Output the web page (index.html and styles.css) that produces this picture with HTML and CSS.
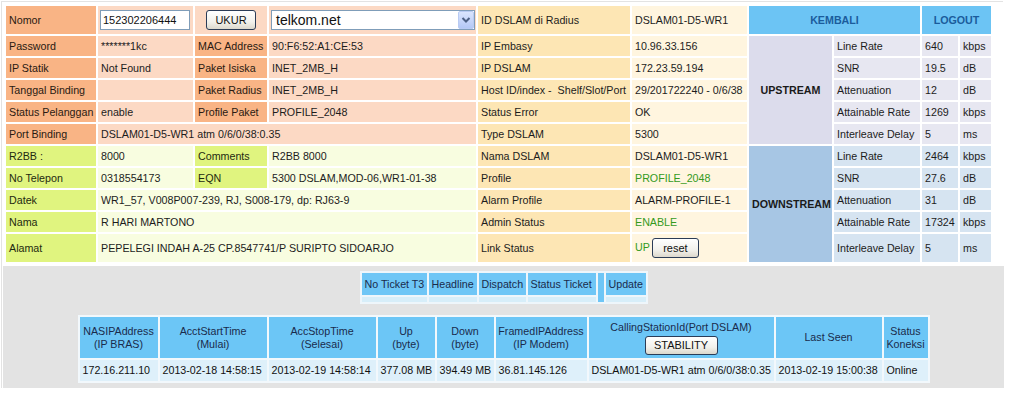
FILE: index.html
```html
<!DOCTYPE html>
<html>
<head>
<meta charset="utf-8">
<title>Ukur</title>
<link rel="stylesheet" href="styles.css">
</head>
<body>
<div class="page">
  <table class="main">
    <colgroup>
      <col class="c1"><col class="c2"><col class="c3"><col class="c4"><col class="c5">
      <col class="c6"><col class="c7"><col class="c8"><col class="c9"><col class="c10">
    </colgroup>
    <tr class="tall">
      <td class="ol">Nomor</td>
      <td class="ov ctl"><input class="num" type="text" value="152302206444"></td>
      <td class="ov center"><button class="btn ukur">UKUR</button></td>
      <td class="ov ctl">
        <div class="select"><span class="sel-text">telkom.net</span><span class="sel-arrow"><svg width="16" height="18" viewBox="0 0 16 18"><defs><linearGradient id="ag" x1="0" y1="0" x2="0" y2="1"><stop offset="0" stop-color="#dbe6fe"/><stop offset="1" stop-color="#b3c7f5"/></linearGradient></defs><rect x="0.5" y="0.5" width="15" height="17" rx="1.5" fill="url(#ag)" stroke="#b9cbf3"/><path d="M4.5 7 L8 10.5 L11.5 7" fill="none" stroke="#4d6185" stroke-width="2"/></svg></span></div>
      </td>
      <td class="ml">ID DSLAM di Radius</td>
      <td class="mv">DSLAM01-D5-WR1</td>
      <td class="nav" colspan="2">KEMBALI</td>
      <td class="nav" colspan="2">LOGOUT</td>
    </tr>
    <tr>
      <td class="ol">Password</td>
      <td class="ov">*******1kc</td>
      <td class="ol">MAC Address</td>
      <td class="ov">90:F6:52:A1:CE:53</td>
      <td class="ml">IP Embasy</td>
      <td class="mv">10.96.33.156</td>
      <td class="up" rowspan="5">UPSTREAM</td>
      <td class="uc">Line Rate</td>
      <td class="uc">640</td>
      <td class="uc">kbps</td>
    </tr>
    <tr>
      <td class="ol">IP Statik</td>
      <td class="ov">Not Found</td>
      <td class="ol">Paket Isiska</td>
      <td class="ov">INET_2MB_H</td>
      <td class="ml">IP DSLAM</td>
      <td class="mv">172.23.59.194</td>
      <td class="uc">SNR</td>
      <td class="uc">19.5</td>
      <td class="uc">dB</td>
    </tr>
    <tr>
      <td class="ol">Tanggal Binding</td>
      <td class="ov"></td>
      <td class="ol">Paket Radius</td>
      <td class="ov">INET_2MB_H</td>
      <td class="ml">Host ID/index -&nbsp; Shelf/Slot/Port</td>
      <td class="mv">29/201722240 - 0/6/38</td>
      <td class="uc">Attenuation</td>
      <td class="uc">12</td>
      <td class="uc">dB</td>
    </tr>
    <tr>
      <td class="ol">Status Pelanggan</td>
      <td class="ov">enable</td>
      <td class="ol">Profile Paket</td>
      <td class="ov">PROFILE_2048</td>
      <td class="ml">Status Error</td>
      <td class="mv">OK</td>
      <td class="uc">Attainable Rate</td>
      <td class="uc">1269</td>
      <td class="uc">kbps</td>
    </tr>
    <tr>
      <td class="ol">Port Binding</td>
      <td class="ov" colspan="3">DSLAM01-D5-WR1 atm 0/6/0/38:0.35</td>
      <td class="ml">Type DSLAM</td>
      <td class="mv">5300</td>
      <td class="uc">Interleave Delay</td>
      <td class="uc">5</td>
      <td class="uc">ms</td>
    </tr>
    <tr>
      <td class="gl">R2BB :</td>
      <td class="gv">8000</td>
      <td class="gl">Comments</td>
      <td class="gv">R2BB 8000</td>
      <td class="ml">Nama DSLAM</td>
      <td class="mv">DSLAM01-D5-WR1</td>
      <td class="down" rowspan="5">DOWNSTREAM</td>
      <td class="dc">Line Rate</td>
      <td class="dc">2464</td>
      <td class="dc">kbps</td>
    </tr>
    <tr>
      <td class="gl">No Telepon</td>
      <td class="gv">0318554173</td>
      <td class="gl">EQN</td>
      <td class="gv">5300 DSLAM,MOD-06,WR1-01-38</td>
      <td class="ml">Profile</td>
      <td class="mv green">PROFILE_2048</td>
      <td class="dc">SNR</td>
      <td class="dc">27.6</td>
      <td class="dc">dB</td>
    </tr>
    <tr>
      <td class="gl">Datek</td>
      <td class="gv" colspan="3">WR1_57, V008P007-239, RJ, S008-179, dp: RJ63-9</td>
      <td class="ml">Alarm Profile</td>
      <td class="mv">ALARM-PROFILE-1</td>
      <td class="dc">Attenuation</td>
      <td class="dc">31</td>
      <td class="dc">dB</td>
    </tr>
    <tr>
      <td class="gl">Nama</td>
      <td class="gv" colspan="3">R HARI MARTONO</td>
      <td class="ml">Admin Status</td>
      <td class="mv green">ENABLE</td>
      <td class="dc">Attainable Rate</td>
      <td class="dc">17324</td>
      <td class="dc">kbps</td>
    </tr>
    <tr class="tall">
      <td class="gl">Alamat</td>
      <td class="gv" colspan="3">PEPELEGI INDAH A-25 CP.8547741/P SURIPTO SIDOARJO</td>
      <td class="ml">Link Status</td>
      <td class="mv"><span class="green">UP</span><button class="btn reset">reset</button></td>
      <td class="dc">Interleave Delay</td>
      <td class="dc">5</td>
      <td class="dc">ms</td>
    </tr>
  </table>

  <div class="bottom">
    <table class="ticket">
      <colgroup>
        <col class="t1"><col class="t2"><col class="t3"><col class="t4"><col class="t5"><col class="t6">
      </colgroup>
      <tr class="th">
        <td>No Ticket T3</td>
        <td>Headline</td>
        <td>Dispatch</td>
        <td>Status Ticket</td>
        <td class="bar" rowspan="2"></td>
        <td>Update</td>
      </tr>
      <tr class="tb">
        <td></td><td></td><td></td><td></td><td></td>
      </tr>
    </table>

    <table class="sess">
      <colgroup>
        <col class="s1"><col class="s2"><col class="s3"><col class="s4"><col class="s5">
        <col class="s6"><col class="s7"><col class="s8"><col class="s9">
      </colgroup>
      <tr class="sh">
        <td>NASIPAddress<br>(IP BRAS)</td>
        <td>AcctStartTime<br>(Mulai)</td>
        <td>AccStopTime<br>(Selesai)</td>
        <td>Up<br>(byte)</td>
        <td>Down<br>(byte)</td>
        <td>FramedIPAddress<br>(IP Modem)</td>
        <td>CallingStationId(Port DSLAM)<br><button class="btn stab">STABILITY</button></td>
        <td>Last Seen</td>
        <td>Status<br>Koneksi</td>
      </tr>
      <tr class="sd">
        <td>172.16.211.10</td>
        <td>2013-02-18 14:58:15</td>
        <td>2013-02-19 14:58:14</td>
        <td>377.08 MB</td>
        <td>394.49 MB</td>
        <td>36.81.145.126</td>
        <td>DSLAM01-D5-WR1 atm 0/6/0/38:0.35</td>
        <td>2013-02-19 15:00:38</td>
        <td>Online</td>
      </tr>
    </table>
  </div>
</div>
</body>
</html>
```

FILE: styles.css
```css
* { box-sizing: border-box; }

body {
  margin: 0;
  background: #ffffff;
  font-family: "Liberation Sans", Arial, sans-serif;
  font-size: 10.7px;
  color: #1c1c1c;
}

.page {
  margin: 1px 0 0 1px;
  width: 1002px;
  border-top: 1px solid #e3e3e3;
  border-left: 1px solid #e3e3e3;
}

/* ---------- main info table ---------- */
.main {
  margin: 2px 0 0 2px;
  border-collapse: separate;
  border-spacing: 2px;
  table-layout: fixed;
  width: 989px;
}
.main .c1 { width: 90px; }
.main .c2 { width: 95px; }
.main .c3 { width: 72px; }
.main .c4 { width: 207px; }
.main .c5 { width: 152px; }
.main .c6 { width: 115px; }
.main .c7 { width: 83px; }
.main .c8 { width: 86px; }
.main .c9 { width: 36px; }
.main .c10 { width: 31px; }

.main td {
  height: 20px;
  padding: 0 3px;
  line-height: 13px;
  white-space: nowrap;
  overflow: hidden;
  vertical-align: middle;
}
.main tr.tall td { height: 28px; }
.main td.ctl { padding: 0 2px; }
.main td.center { text-align: center; }

.ol { background: #f9b485; color: #2a1a12; }
.ov { background: #fcd9c4; }
.gl { background: #e0f47f; color: #1e2a10; }
.gv { background: #f8fde0; }
.ml { background: #fde6b4; }
.mv { background: #fff5df; }
.nav {
  background: #6cc4f4;
  color: #1b5c9c;
  font-weight: bold;
  text-align: center;
}
.up {
  background: #dcdcec;
  font-weight: bold;
  text-align: center;
  color: #1a1a1a;
}
.uc { background: #e7e7f1; }
.down {
  background: #a7c6e4;
  font-weight: bold;
  text-align: center;
  color: #1a1a1a;
}
.dc { background: #d6e4f1; }
.green { color: #349a1c; }

/* ---------- form controls ---------- */
.num {
  display: block;
  width: 90px;
  height: 20px;
  border: 1px solid #7f9db9;
  background: #fff;
  padding: 0 2px;
  font-family: "Liberation Sans", Arial, sans-serif;
  font-size: 11px;
  color: #111;
}

.btn {
  font-family: "Liberation Sans", Arial, sans-serif;
  font-size: 11px;
  color: #111;
  border: 1px solid #2b3c57;
  border-radius: 3px;
  background: linear-gradient(#ffffff, #f2f1ec 60%, #dcd8cc);
  padding: 0;
  line-height: 15px;
  cursor: pointer;
}
.ukur { width: 50px; height: 20px; }
.reset { width: 47px; height: 20px; margin-left: 2px; vertical-align: middle; }
.stab { width: 73px; height: 19px; margin-top: 2px; }

.select {
  display: flex;
  align-items: center;
  width: 204px;
  height: 20px;
  border: 1px solid #7f9db9;
  background: #fff;
}
.sel-text {
  flex: 1;
  padding-left: 4px;
  font-size: 14px;
  line-height: 18px;
  color: #111;
}
.sel-arrow {
  display: flex;
  width: 16px;
  height: 18px;
}

/* ---------- bottom gray area ---------- */
.bottom {
  margin-top: 2px;
  margin-left: 1px;
  width: 1001px;
  height: 122px;
  padding-top: 5px;
  background: #e3e3e3;
}

.ticket {
  margin: 0 auto;
  border-collapse: separate;
  border-spacing: 2px;
  table-layout: fixed;
  width: 288px;
  background: #eef6fb;
}
.ticket .t1 { width: 65px; }
.ticket .t2 { width: 48px; }
.ticket .t3 { width: 47px; }
.ticket .t4 { width: 68px; }
.ticket .t5 { width: 6px; }
.ticket .t6 { width: 40px; }
.ticket td {
  padding: 0 3px;
  white-space: nowrap;
  color: #1a2b4c;
}
.ticket .th td { height: 22px; background: #6ec6f6; }
.ticket .tb td { height: 5px; background: #d7eef9; }
.ticket td.bar { background: #6ec6f6; padding: 0; }

.sess {
  margin: 11px auto 0;
  border-collapse: separate;
  border-spacing: 2px;
  table-layout: fixed;
  width: 852px;
  background: #f2f8fc;
}
.sess .s1 { width: 78px; }
.sess .s2 { width: 107px; }
.sess .s3 { width: 107px; }
.sess .s4 { width: 57px; }
.sess .s5 { width: 57px; }
.sess .s6 { width: 91px; }
.sess .s7 { width: 185px; }
.sess .s8 { width: 106px; }
.sess .s9 { width: 44px; }
.sess td {
  white-space: nowrap;
  line-height: 13px;
  vertical-align: middle;
}
.sess .sh td {
  height: 41px;
  padding: 0;
  background: #6cc6f6;
  color: #1a2b4c;
  text-align: center;
}
.sess .sd td {
  height: 21px;
  padding: 0 3px;
  background: #def0fa;
  color: #111;
}
```
